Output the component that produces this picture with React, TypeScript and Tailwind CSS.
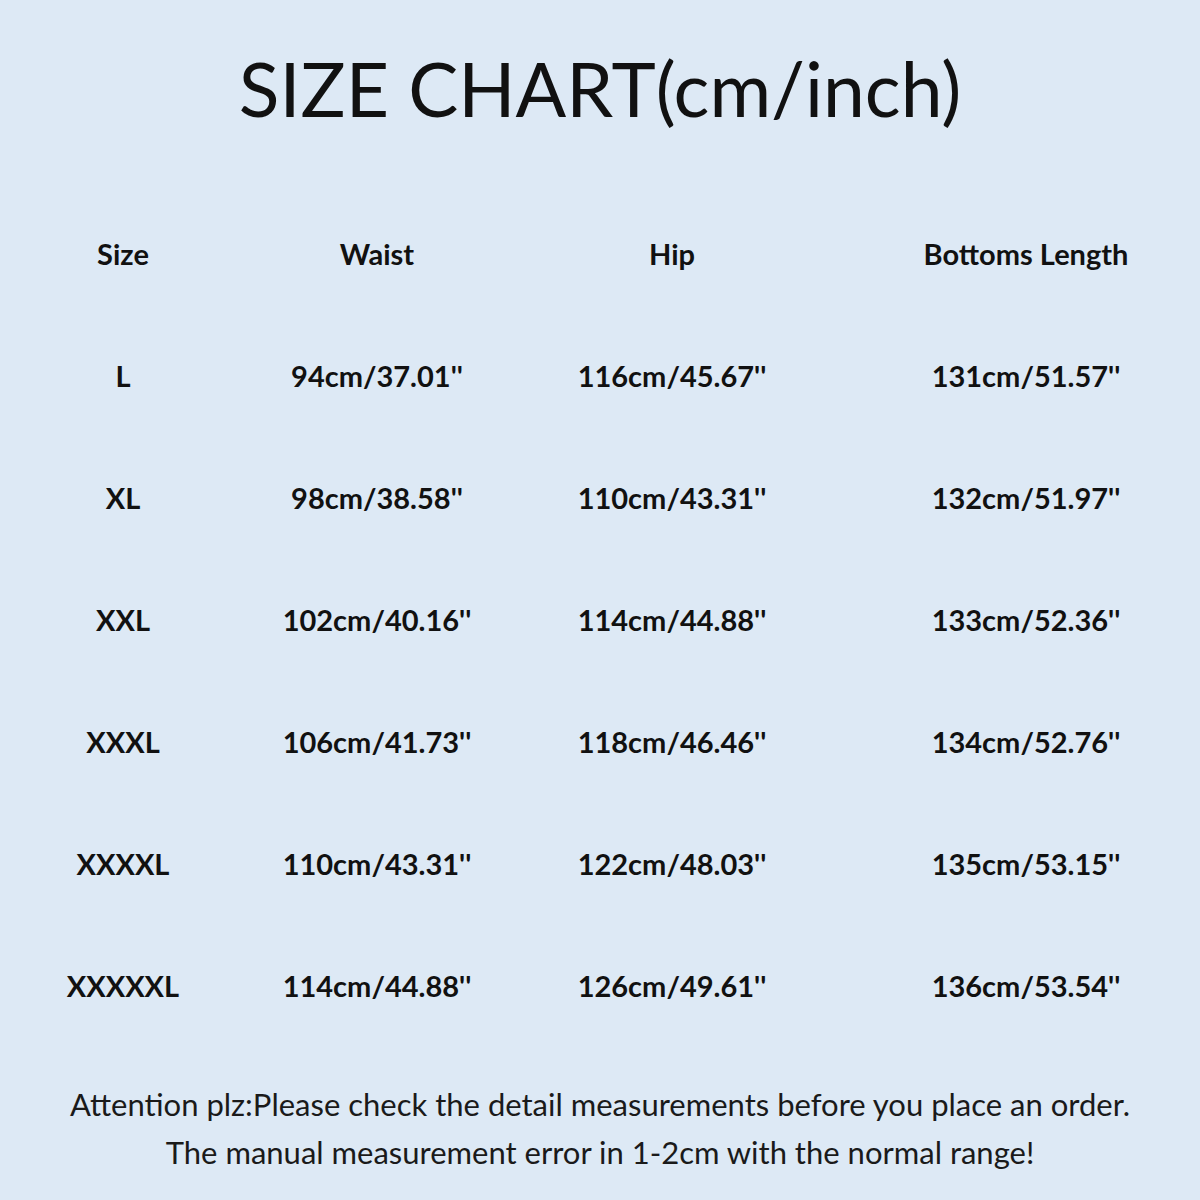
const rows = [
  ['L', "94cm/37.01''", "116cm/45.67''", "131cm/51.57''"],
  ['XL', "98cm/38.58''", "110cm/43.31''", "132cm/51.97''"],
  ['XXL', "102cm/40.16''", "114cm/44.88''", "133cm/52.36''"],
  ['XXXL', "106cm/41.73''", "118cm/46.46''", "134cm/52.76''"],
  ['XXXXL', "110cm/43.31''", "122cm/48.03''", "135cm/53.15''"],
  ['XXXXXL', "114cm/44.88''", "126cm/49.61''", "136cm/53.54''"],
]

const headers = ['Size', 'Waist', 'Hip', 'Bottoms Length']

export default function App() {
  return (
    <main className="w-[1200px] h-[1200px] overflow-hidden bg-[#dde9f5] text-[#111] font-['Lato','Open_Sans',sans-serif]">
      {/* title */}
      <h1 className="pt-[38px] h-[150px] text-center text-[75px] leading-[100px] font-['Lato',sans-serif] font-normal">
        SIZE CHART(cm/inch)
      </h1>

      {/* table */}
      <div className="mt-[43px] grid grid-cols-[246px_262px_328px_1fr] auto-rows-[122px] items-center text-center text-[29px] font-bold">
        {headers.map((h, i) => (
          <div key={h} className={i === 3 ? 'pl-4' : ''}>{h}</div>
        ))}
        {rows.map((row) =>
          row.map((cell, i) => (
            <div key={row[0] + i} className={i === 3 ? 'pl-4' : ''}>{cell}</div>
          ))
        )}
      </div>

      {/* note */}
      <div className="mt-[33px] text-center text-[31px] leading-[48px] text-[#1a1a1a]">
        <p>Attention plz:Please check the detail measurements before you place an order.</p>
        <p>The manual measurement error in 1-2cm with the normal range!</p>
      </div>
    </main>
  )
}
